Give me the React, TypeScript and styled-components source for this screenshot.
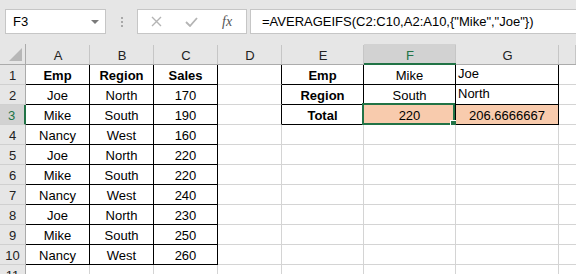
import React from "react";
import styled, { createGlobalStyle, css } from "styled-components";

const GRID = "#d4d4d4";
const BLACK = "#000000";
const GREEN = "#217346";

const Global = createGlobalStyle`
  html, body { margin: 0; padding: 0; background: #fff; overflow: hidden; }
  body { font-family: "Liberation Sans", Arial, sans-serif; }
`;

const Page = styled.div`
  width: 576px;
  height: 274px;
  overflow: hidden;
  background: #fff;
`;

const Toolbar = styled.div`
  height: 44px;
  background: #e6e6e6;
  display: flex;
  align-items: flex-start;
  padding: 9px 0 0 5px;
  box-sizing: border-box;
`;

const NameBox = styled.div`
  width: 101px;
  height: 25px;
  box-sizing: border-box;
  background: #fff;
  border: 1px solid #c6c6c6;
  display: flex;
  align-items: center;
  justify-content: space-between;
  padding: 0 6px 0 7px;
  font-size: 13px;
  color: #000;
`;

const Caret = styled.span`
  width: 0;
  height: 0;
  border-left: 4px solid transparent;
  border-right: 4px solid transparent;
  border-top: 4px solid #7a7a7a;
`;

const Grip = styled.div`
  width: 31px;
  height: 25px;
  display: flex;
  flex-direction: column;
  align-items: center;
  justify-content: center;
  gap: 2px;
  & > i {
    display: block;
    width: 2px;
    height: 2px;
    background: #a8a8a8;
  }
`;

const FxBox = styled.div`
  width: 110px;
  height: 25px;
  box-sizing: border-box;
  background: #fff;
  border: 1px solid #c6c6c6;
  display: flex;
  align-items: center;
  padding: 0 0 0 13px;
  gap: 23px;
`;

const FxLabel = styled.span`
  font-family: "Liberation Serif", "Times New Roman", serif;
  font-style: italic;
  font-size: 14px;
  color: #555;
  margin-left: 1px;
`;

const FormulaBox = styled.div`
  flex: 1;
  height: 25px;
  margin-left: 3px;
  margin-right: -4px;
  box-sizing: border-box;
  background: #fff;
  border: 1px solid #c6c6c6;
  display: flex;
  align-items: center;
  padding-left: 11px;
  font-size: 13px;
  color: #000;
  white-space: nowrap;
`;

const Sheet = styled.div`
  display: grid;
  grid-template-columns: 26px 64px 64px 64px 64px 82px 92px 103px 1fr;
  grid-template-rows: 21px repeat(11, 20px);
  font-size: 13px;
`;

const headerBase = css`
  box-sizing: border-box;
  background: #e6e6e6;
  display: flex;
  align-items: center;
  justify-content: center;
  color: #222;
  font-size: 13px;
`;

const Corner = styled.div`
  ${headerBase};
  border-right: 1px solid #ababab;
  border-bottom: 1px solid #ababab;
  justify-content: flex-end;
  align-items: flex-end;
  padding: 0 3px 3px 0;
`;

const ColHead = styled.div<{ $active?: boolean; $last?: boolean }>`
  ${headerBase};
  position: relative;
  padding-top: 2px;
  border-bottom: 1px solid #ababab;
  ${(p) =>
    p.$active &&
    css`
      background: #d2d2d2;
      color: ${GREEN};
      border-bottom: 2px solid ${GREEN};
      padding-top: 3px;
    `}
  &::after {
    content: "";
    position: absolute;
    right: 0;
    top: 1px;
    bottom: 0;
    width: 1px;
    background: ${(p) => (p.$last ? "transparent" : "#c6c6c6")};
  }
`;

const RowHead = styled.div<{ $active?: boolean }>`
  ${headerBase};
  border-right: 1px solid #ababab;
  border-bottom: 1px solid #d0d0d0;
  padding-top: 1px;
  ${(p) =>
    p.$active &&
    css`
      background: #d2d2d2;
      color: ${GREEN};
      border-right: 2px solid ${GREEN};
      padding-right: 1px;
    `}
`;

const Cell = styled.div<{
  $align?: "left" | "center";
  $bold?: boolean;
  $fill?: string;
  $r?: string;
  $b?: string;
  $lift?: boolean;
}>`
  position: relative;
  box-sizing: border-box;
  border-right: ${(p) => (p.$r ? `1px solid ${p.$r}` : "none")};
  border-bottom: 1px solid ${(p) => p.$b || GRID};
  background: ${(p) => p.$fill || "#fff"};
  display: flex;
  align-items: center;
  justify-content: ${(p) => (p.$align === "left" ? "flex-start" : "center")};
  padding: ${(p) => (p.$lift ? "0 0 2px 2px" : "1px 0 0 0")};
  font-weight: ${(p) => (p.$bold ? 700 : 400)};
  color: #000;
  white-space: nowrap;
`;

const Selection = styled.div`
  position: absolute;
  left: -2px;
  top: -2px;
  width: 93px;
  height: 22px;
  box-sizing: border-box;
  border: 2px solid ${GREEN};
  pointer-events: none;
`;

const FillHandle = styled.div`
  position: absolute;
  right: -4px;
  bottom: -4px;
  width: 7px;
  height: 7px;
  box-sizing: border-box;
  background: ${GREEN};
  border: 1px solid #fff;
`;

type CellData = {
  text?: string;
  align?: "left" | "center";
  bold?: boolean;
  fill?: string;
  r?: string;
  b?: string;
  lift?: boolean;
  selected?: boolean;
};

const left = [
  ["Emp", "Region", "Sales"],
  ["Joe", "North", "170"],
  ["Mike", "South", "190"],
  ["Nancy", "West", "160"],
  ["Joe", "North", "220"],
  ["Mike", "South", "220"],
  ["Nancy", "West", "240"],
  ["Joe", "North", "230"],
  ["Mike", "South", "250"],
  ["Nancy", "West", "260"],
];

const PEACH = "#f8cbad";

const summary: CellData[][] = [
  [
    { text: "Emp", bold: true },
    { text: "Mike" },
    { text: "Joe", align: "left", lift: true },
  ],
  [
    { text: "Region", bold: true },
    { text: "South" },
    { text: "North", align: "left", lift: true },
  ],
  [
    { text: "Total", bold: true },
    { text: "220", fill: PEACH, selected: true },
    { text: "206.6666667", fill: PEACH },
  ],
];

function buildRow(r: number): CellData[] {
  const cells: CellData[] = [];
  const inLeft = r < 10;
  for (let c = 0; c < 3; c++) {
    if (inLeft) {
      cells.push({ text: left[r][c], bold: r === 0, r: BLACK, b: BLACK });
    } else {
      cells.push({ r: GRID });
    }
  }
  const inSum = r < 3;
  cells.push({ r: inSum ? BLACK : GRID });
  for (let c = 0; c < 3; c++) {
    if (inSum) {
      cells.push({ ...summary[r][c], r: BLACK, b: BLACK });
    } else {
      cells.push({ r: GRID });
    }
  }
  cells.push({});
  return cells;
}

const cols = ["A", "B", "C", "D", "E", "F", "G", ""];

export default function App() {
  return (
    <Page>
      <Global />
      <Toolbar>
        <NameBox>
          <span>F3</span>
          <Caret />
        </NameBox>
        <Grip>
          <i />
          <i />
          <i />
        </Grip>
        <FxBox>
          <svg width="11" height="11" viewBox="0 0 11 11">
            <path d="M1 1 L10 10 M10 1 L1 10" stroke="#b4b4b4" strokeWidth="1.4" fill="none" />
          </svg>
          <svg width="13" height="10" viewBox="0 0 13 10">
            <path d="M1 5 L5 9 L12 1" stroke="#b4b4b4" strokeWidth="1.8" fill="none" />
          </svg>
          <FxLabel>fx</FxLabel>
        </FxBox>
        <FormulaBox>=AVERAGEIFS(C2:C10,A2:A10,{"{"}"Mike","Joe"{"}"})</FormulaBox>
      </Toolbar>
      <Sheet>
        <Corner>
          <svg width="13" height="13" viewBox="0 0 13 13">
            <polygon points="13,0 13,13 0,13" fill="#b7b7b7" />
          </svg>
        </Corner>
        {cols.map((c, i) => (
          <ColHead key={i} $active={c === "F"} $last={i === cols.length - 1 && false}>
            {c}
          </ColHead>
        ))}
        {Array.from({ length: 11 }, (_, r) => (
          <React.Fragment key={r}>
            <RowHead $active={r === 2}>{r + 1}</RowHead>
            {buildRow(r).map((cell, ci) => (
              <Cell
                key={ci}
                $align={cell.align}
                $bold={cell.bold}
                $fill={cell.fill}
                $r={cell.r}
                $b={cell.b}
                $lift={cell.lift}
              >
                {cell.text}
                {cell.selected && (
                  <Selection>
                    <FillHandle />
                  </Selection>
                )}
              </Cell>
            ))}
          </React.Fragment>
        ))}
      </Sheet>
    </Page>
  );
}
